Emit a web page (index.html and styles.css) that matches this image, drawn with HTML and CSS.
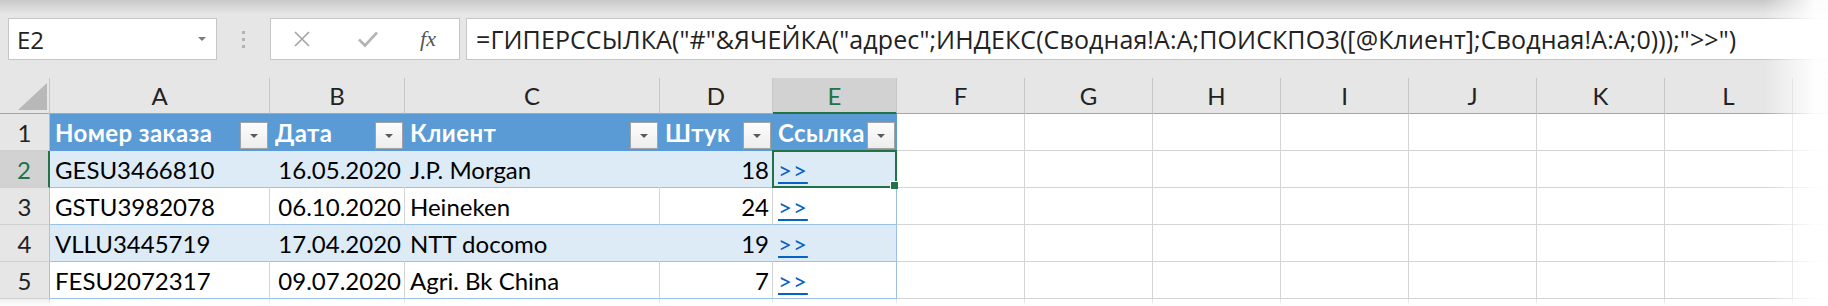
FILE: index.html
```html
<!DOCTYPE html>
<html lang="ru">
<head>
  <meta charset="UTF-8">
  <title>Книга1 - Excel</title>
  <link rel="stylesheet" href="styles.css">
</head>
<body>
  <div class="window">
    <div class="formula-bar">
      <div class="name-box">
        <span>E2</span>
        <span class="name-box-arrow"></span>
      </div>
      <div class="bar-grip"><i></i><i></i><i></i></div>
      <div class="bar-buttons">
        <svg width="18" height="18" viewBox="0 0 18 18"><path d="M2 2 L16 16 M16 2 L2 16" stroke="#a3a3a3" stroke-width="1.6" fill="none"/></svg>
        <svg width="22" height="18" viewBox="0 0 22 18"><path d="M2 9.5 L8 15.5 L20 2.5" stroke="#b5b5b5" stroke-width="2.6" fill="none"/></svg>
        <span class="fx">fx</span>
      </div>
      <div class="formula-input">=ГИПЕРССЫЛКА("#"&amp;ЯЧЕЙКА("адрес";ИНДЕКС(Сводная!A:A;ПОИСКПОЗ([@Клиент];Сводная!A:A;0)));"&gt;&gt;")</div>
    </div>

    <div class="sheet">
      <div class="row row-letters">
        <div class="cell corner"><span class="corner-mark"></span></div>
        <div class="cell col-head">A</div>
        <div class="cell col-head">B</div>
        <div class="cell col-head">C</div>
        <div class="cell col-head">D</div>
        <div class="cell col-head col-head-active">E</div>
        <div class="cell col-head">F</div>
        <div class="cell col-head">G</div>
        <div class="cell col-head">H</div>
        <div class="cell col-head">I</div>
        <div class="cell col-head">J</div>
        <div class="cell col-head">K</div>
        <div class="cell col-head">L</div>
        <div class="cell col-head"></div>
      </div>

      <div class="row">
        <div class="cell row-head">1</div>
        <div class="cell t-head"><span class="t-head-text">Номер заказа</span><span class="filter-btn"></span></div>
        <div class="cell t-head"><span class="t-head-text">Дата</span><span class="filter-btn"></span></div>
        <div class="cell t-head"><span class="t-head-text">Клиент</span><span class="filter-btn"></span></div>
        <div class="cell t-head"><span class="t-head-text">Штук</span><span class="filter-btn"></span></div>
        <div class="cell t-head"><span class="t-head-text">Ссылка</span><span class="filter-btn"></span></div>
        <div class="cell"></div><div class="cell"></div><div class="cell"></div><div class="cell"></div>
        <div class="cell"></div><div class="cell"></div><div class="cell"></div><div class="cell"></div>
      </div>

      <div class="row">
        <div class="cell row-head row-head-active">2</div>
        <div class="cell t-band">GESU3466810</div>
        <div class="cell t-band num">16.05.2020</div>
        <div class="cell t-band">J.P. Morgan</div>
        <div class="cell t-band num">18</div>
        <div class="cell t-band t-last selected"><span class="link">&gt;&gt;</span></div>
        <div class="cell"></div><div class="cell"></div><div class="cell"></div><div class="cell"></div>
        <div class="cell"></div><div class="cell"></div><div class="cell"></div><div class="cell"></div>
      </div>

      <div class="row">
        <div class="cell row-head">3</div>
        <div class="cell t-plain">GSTU3982078</div>
        <div class="cell t-plain num">06.10.2020</div>
        <div class="cell t-plain">Heineken</div>
        <div class="cell t-plain num">24</div>
        <div class="cell t-plain t-last"><span class="link">&gt;&gt;</span></div>
        <div class="cell"></div><div class="cell"></div><div class="cell"></div><div class="cell"></div>
        <div class="cell"></div><div class="cell"></div><div class="cell"></div><div class="cell"></div>
      </div>

      <div class="row">
        <div class="cell row-head">4</div>
        <div class="cell t-band">VLLU3445719</div>
        <div class="cell t-band num">17.04.2020</div>
        <div class="cell t-band">NTT docomo</div>
        <div class="cell t-band num">19</div>
        <div class="cell t-band t-last"><span class="link">&gt;&gt;</span></div>
        <div class="cell"></div><div class="cell"></div><div class="cell"></div><div class="cell"></div>
        <div class="cell"></div><div class="cell"></div><div class="cell"></div><div class="cell"></div>
      </div>

      <div class="row">
        <div class="cell row-head">5</div>
        <div class="cell t-plain">FESU2072317</div>
        <div class="cell t-plain num">09.07.2020</div>
        <div class="cell t-plain">Agri. Bk China</div>
        <div class="cell t-plain num">7</div>
        <div class="cell t-plain t-last"><span class="link">&gt;&gt;</span></div>
        <div class="cell"></div><div class="cell"></div><div class="cell"></div><div class="cell"></div>
        <div class="cell"></div><div class="cell"></div><div class="cell"></div><div class="cell"></div>
      </div>

      <div class="row row-cut">
        <div class="cell row-head"></div>
        <div class="cell"></div><div class="cell"></div><div class="cell"></div><div class="cell"></div>
        <div class="cell"></div><div class="cell"></div><div class="cell"></div><div class="cell"></div>
        <div class="cell"></div><div class="cell"></div><div class="cell"></div><div class="cell"></div>
        <div class="cell"></div>
      </div>
    </div>

    <div class="fade-top"></div>
    <div class="fade-bottom"></div>
    <div class="fade-right"></div>
  </div>
</body>
</html>
```

FILE: styles.css
```css
* {
  margin: 0;
  padding: 0;
  box-sizing: border-box;
}

body {
  width: 1828px;
  height: 306px;
  overflow: hidden;
  background-color: #fff;
  font-family: Lato, "Open Sans", sans-serif;
  color: #000;
}

.window {
  position: relative;
  height: 306px;
  overflow: hidden;
}

/* строка формул */
.formula-bar {
  display: flex;
  align-items: flex-start;
  height: 78px;
  padding: 18px 0 0 8px;
  background-color: #e6e6e6;
  font-family: "Open Sans", "Noto Sans", sans-serif;
  color: #222;
}

.name-box {
  display: flex;
  align-items: center;
  justify-content: space-between;
  width: 209px;
  height: 42px;
  padding: 0 10px 0 8px;
  background-color: #fff;
  border: 1px solid #c6c6c6;
  font-size: 24px;
}

.name-box-arrow {
  width: 0;
  height: 0;
  border-left: 4px solid transparent;
  border-right: 4px solid transparent;
  border-top: 4px solid #7c7c7c;
}

.bar-grip {
  display: flex;
  flex-direction: column;
  align-items: center;
  justify-content: center;
  gap: 4px;
  width: 53px;
  height: 42px;
}

.bar-grip i {
  width: 3px;
  height: 3px;
  background-color: #b3b3b3;
}

.bar-buttons {
  display: grid;
  grid-template-columns: 62px 70px 50px;
  align-items: center;
  justify-items: center;
  width: 190px;
  height: 42px;
  background-color: #fff;
  border: 1px solid #c6c6c6;
}

.fx {
  font-family: "Liberation Serif", "DejaVu Serif", serif;
  font-style: italic;
  font-size: 22px;
  color: #555;
}

.formula-input {
  flex: 1;
  display: flex;
  align-items: center;
  height: 42px;
  margin-left: 6px;
  padding-left: 9px;
  background-color: #fff;
  border: 1px solid #c6c6c6;
  border-right: none;
  font-size: 25px;
  letter-spacing: 0.1px;
  white-space: nowrap;
  overflow: hidden;
}

/* лист */
.sheet {
  height: 228px;
}

.row {
  display: grid;
  grid-template-columns: 50px 220px 135px 255px 113px 124px repeat(7, 128px) 1fr;
  height: 37px;
}

.row-letters {
  height: 36px;
}

.row-cut {
  height: 7px;
}

.cell {
  display: flex;
  align-items: center;
  min-width: 0;
  padding: 0 5px;
  border-right: 1px solid #d4d4d4;
  border-bottom: 1px solid #d4d4d4;
  font-size: 24px;
  white-space: nowrap;
  overflow: hidden;
}

.corner {
  position: relative;
  background-color: #e6e6e6;
  border-right-color: #c6c6c6;
  border-bottom-color: #a6a6a6;
}

.corner-mark {
  position: absolute;
  left: 18px;
  top: 5px;
  width: 0;
  height: 0;
  border-left: 29px solid transparent;
  border-bottom: 27px solid #b8b8b8;
}

.col-head {
  justify-content: center;
  background-color: #e6e6e6;
  border-right-color: #c6c6c6;
  border-bottom-color: #a6a6a6;
  font-size: 24px;
  color: #222;
}

.col-head-active {
  background-color: #d2d2d2;
  border-bottom: 2px solid #217346;
  color: #217346;
}

.row-head {
  justify-content: center;
  background-color: #e6e6e6;
  border-right-color: #bdbdbd;
  border-bottom-color: #d0d0d0;
  font-size: 24px;
  color: #222;
}

.row-head-active {
  background-color: #d2d2d2;
  border-right: 2px solid #217346;
  color: #217346;
}

/* умная таблица */
.t-head {
  justify-content: space-between;
  padding-right: 1px;
  background-color: #5b9bd5;
  border-right-color: #5b9bd5;
  border-bottom-color: #5b9bd5;
  color: #fff;
  font-weight: 700;
  letter-spacing: 0.4px;
}

.t-head-text {
  min-width: 0;
  overflow: hidden;
}

.filter-btn {
  flex: none;
  display: flex;
  align-items: center;
  justify-content: center;
  align-self: flex-end;
  width: 28px;
  height: 27px;
  margin-bottom: 1px;
  background: linear-gradient(#fdfdfd, #ededed);
  border: 1px solid #a3a3a3;
}

.filter-btn::after {
  content: "";
  width: 0;
  height: 0;
  border-left: 4px solid transparent;
  border-right: 4px solid transparent;
  border-top: 4px solid #5a5a5a;
}

.t-band {
  background-color: #ddebf7;
  border-right-color: #ddebf7;
  border-bottom-color: #9bc2e6;
}

.t-plain {
  border-bottom-color: #9bc2e6;
}

.t-last {
  border-right-color: #9bc2e6;
}

.num {
  justify-content: flex-end;
  padding-right: 3px;
}

.link {
  color: #0563c1;
  letter-spacing: 1px;
  text-decoration: underline;
  text-decoration-thickness: 2px;
  text-underline-offset: 3px;
}

.selected {
  position: relative;
  overflow: visible;
}

.selected::after {
  content: "";
  position: absolute;
  top: -1px;
  left: -1px;
  right: -1px;
  bottom: -1px;
  border: 2px solid #217346;
}

.selected::before {
  content: "";
  position: absolute;
  right: -2px;
  bottom: -2px;
  z-index: 1;
  width: 7px;
  height: 7px;
  background-color: #217346;
  border-top: 1px solid #fff;
  border-left: 1px solid #fff;
}

/* края скриншота */
.fade-top {
  position: absolute;
  top: 0;
  left: 0;
  right: 0;
  height: 14px;
  background: linear-gradient(rgba(0, 0, 0, 0.13), rgba(0, 0, 0, 0));
}

.fade-bottom {
  position: absolute;
  left: 0;
  right: 0;
  bottom: 0;
  height: 7px;
  background: linear-gradient(rgba(255, 255, 255, 0.3), #fff);
}

.fade-right {
  position: absolute;
  top: 0;
  right: 0;
  bottom: 0;
  width: 64px;
  background: linear-gradient(to right, rgba(255, 255, 255, 0), rgba(255, 255, 255, 0.95) 80%);
}
```
